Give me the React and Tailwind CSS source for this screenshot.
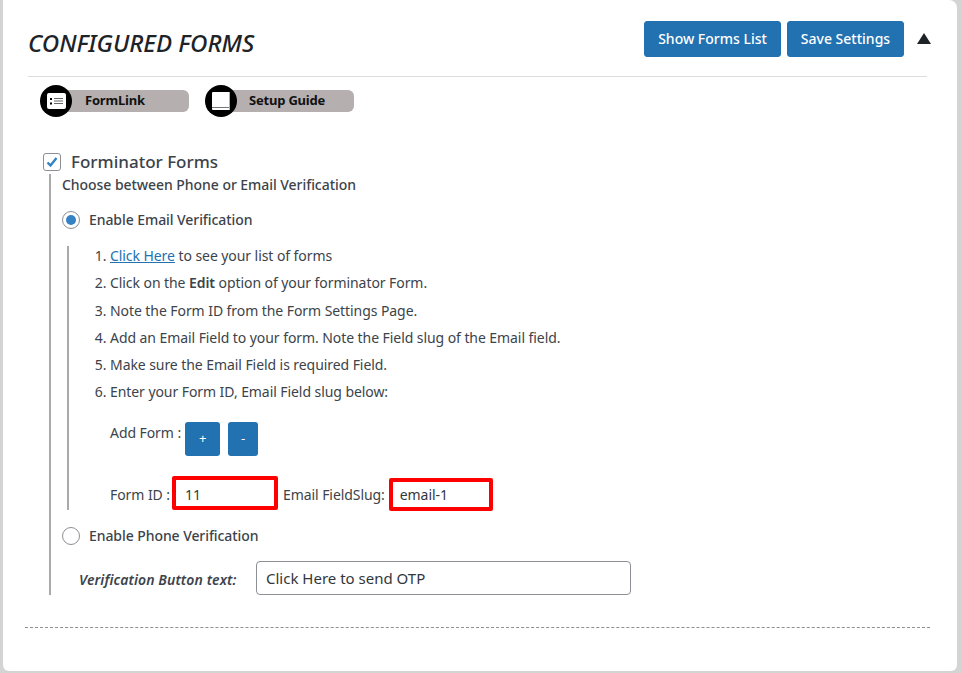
const FONT = "font-['Noto_Sans','Open_Sans',sans-serif]";

const STEPS = [
  <><a href="#" className="text-[#2271b1] underline">Click Here</a> to see your list of forms</>,
  <>Click on the <b className="font-semibold">Edit</b> option of your forminator Form.</>,
  <>Note the Form ID from the Form Settings Page.</>,
  <>Add an Email Field to your form. Note the Field slug of the Email field.</>,
  <>Make sure the Email Field is required Field.</>,
  <>Enter your Form ID, Email Field slug below:</>,
];

function Pill({ label, width, textLeft, icon }) {
  return (
    <div className="relative flex h-[22px] items-center rounded-[6px] bg-[#b5afaf] pb-[2px] text-[13px] leading-none font-bold text-[#111]" style={{ width, paddingLeft: textLeft }}>
      <div className="absolute left-[-1px] top-[-5px] flex h-8 w-8 items-center justify-center rounded-full bg-black">{icon}</div>
      <span className="tracking-[-0.2px]">{label}</span>
    </div>
  );
}

function Radio({ checked }) {
  return (
    <span className="flex h-[18px] w-[18px] shrink-0 items-center justify-center rounded-full border border-[#8c8f94] bg-white">
      {checked && <span className="h-[10px] w-[10px] rounded-full bg-[#3582c4]" />}
    </span>
  );
}

export default function App() {
  return (
    <div className={`h-[673px] w-[961px] overflow-hidden bg-[#d4d4d4] pl-[3px] pr-[4px] pb-[2px] ${FONT}`}>
      <div className="h-full rounded-br-[6px] rounded-tr-[8px] rounded-bl-[6px] bg-white pl-[22px] pr-[27px]">
        <div className="ml-[3px] mr-[3px] flex h-[77px] items-start justify-between border-b border-[#dcdcde] pt-[21px]">
          <h1 className="mt-[6px] text-[24px] leading-[32px] font-medium text-[#1d2327] italic">CONFIGURED FORMS</h1>
          <div className="mr-[-4px] flex items-center gap-[6px]">
            <button className="h-9 w-[137px] rounded-[3px] border border-[#2271b1] bg-[#2271b1] pb-[2px] text-[14px] font-medium text-white">Show Forms List</button>
            <button className="h-9 w-[117px] rounded-[3px] border border-[#2271b1] bg-[#2271b1] pb-[2px] text-[14px] font-medium text-white">Save Settings</button>
            <span className="ml-[7px] mb-[2px] h-0 w-0 border-x-[7px] border-b-[11px] border-x-transparent border-b-[#1d2327]" />
          </div>
        </div>

        <div className="ml-[16px] mt-[13px] flex gap-[17px]">
          <Pill label="FormLink" width={148} textLeft={44} icon={
            <svg width="19" height="16" viewBox="0 0 19 16">
              <rect width="19" height="16" rx="2" fill="#fff" />
              <path d="M3 5h2v2H3zM3 9.5h2v2H3z" fill="#000" />
              <path d="M7 5.5h9M7 8h9M7 10.5h9" stroke="#666" strokeWidth="1.1" />
            </svg>
          } />
          <Pill label="Setup Guide" width={148} textLeft={43} icon={
            <svg width="18" height="18" viewBox="0 0 18 18">
              <rect width="18" height="18" rx="1" fill="#fff" />
              <path d="M0 15.5h18" stroke="#777" strokeWidth="1" />
              <path d="M17.5 0v18" stroke="#e3a857" strokeWidth="1" />
            </svg>
          } />
        </div>

        <div className="ml-[18px] mt-[39px] flex items-center gap-[10px] text-[#3c434a]">
          <span className="flex h-[18px] w-[18px] items-center justify-center rounded-[3px] border border-[#8c8f94] bg-white">
            <svg width="14" height="14" viewBox="0 0 14 14" fill="none"><path d="M2.5 7.5 5.5 10.5 11.5 3" stroke="#3582c4" strokeWidth="2.4" /></svg>
          </span>
          <span className="text-[17px] leading-[22px] font-medium">Forminator Forms</span>
        </div>

        <div className="ml-[24px] mt-[1px] w-fit border-l-2 border-[#aaa] pl-[11px] text-[#3c434a]">
          <p className="pt-[1px] text-[14px] leading-[20px] font-medium tracking-[-0.05px]">Choose between Phone or Email Verification</p>
          <div className="mt-[15px] flex items-center gap-[9px]">
            <Radio checked />
            <span className="text-[14px] leading-[20px] font-medium tracking-[-0.07px]">Enable Email Verification</span>
          </div>

          <div className="ml-[5px] mt-[16px] border-l-2 border-[#aaa] pl-[29px] text-[14px] tracking-[-0.07px]">
            <ol className="list-decimal pl-[12px] pt-[0.2px]">
              {STEPS.map((step, i) => (
                <li key={i} className="mb-[7.2px] h-[20px] leading-[20px]">{step}</li>
              ))}
            </ol>
            <div className="mt-[20px] flex items-start pl-[12px]">
              <span className="mt-[1px] leading-[20px]">Add Form :</span>
              <button className="ml-[4px] h-[34px] w-[35px] rounded-[3px] bg-[#2271b1] text-[13px] text-white">+</button>
              <button className="ml-[8px] h-[34px] w-[30px] rounded-[3px] bg-[#2271b1] text-[13px] text-white">-</button>
            </div>
            <div className="mt-[20px] flex h-[34px] items-start pl-[12px]">
              <span className="mt-[9px] leading-[20px]">Form ID :</span>
              <input readOnly value="11" className="ml-[2px] h-[34px] w-[106px] rounded-[2px] border-[4px] border-[#f00] pl-[9px] pt-[3px] text-[#32373c] outline-none" />
              <span className="ml-[5px] mt-[9px] leading-[20px]">Email FieldSlug:</span>
              <input readOnly value="email-1" className="ml-[4px] mt-[2px] h-[33px] w-[104px] rounded-[2px] border-[4px] border-[#f00] pl-[7px] text-[#32373c] outline-none" />
            </div>
          </div>

          <div className="mt-[16px] flex items-center gap-[9px]">
            <Radio />
            <span className="text-[14px] leading-[20px] font-medium tracking-[-0.07px]">Enable Phone Verification</span>
          </div>
          <div className="mt-[15px] flex items-center">
            <span className="ml-[17px] w-[177px] pt-[2px] text-[14px] font-semibold italic tracking-[0.1px]">Verification Button text:</span>
            <input readOnly value="Click Here to send OTP" className="h-[34px] w-[375px] rounded-[4px] border border-[#8c8f94] px-[9px] text-[15px] text-[#32373c] outline-none" />
          </div>
        </div>

        <div className="mt-[32px] border-t border-dashed border-[#8c8f94]" />
      </div>
    </div>
  );
}
